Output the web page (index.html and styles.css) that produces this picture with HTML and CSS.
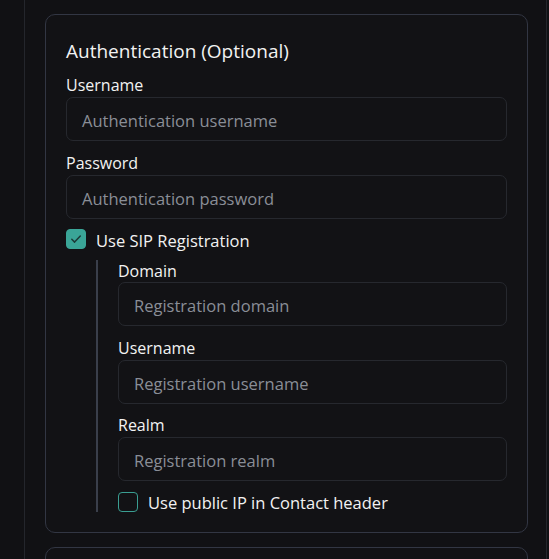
FILE: index.html
```
<!DOCTYPE html>
<html>
<head>
<meta charset="utf-8">
<link rel="stylesheet" href="styles.css">
</head>
<body>
<div class="page">
  <div class="column">
    <section class="card">
      <h2 class="card-title">Authentication (Optional)</h2>
      <div class="field">
        <label class="label">Username</label>
        <div class="input">Authentication username</div>
      </div>
      <div class="field">
        <label class="label">Password</label>
        <div class="input">Authentication password</div>
      </div>
      <div class="check-row">
        <span class="box checked">
          <svg viewBox="0 0 20 20" width="20" height="20"><path d="M5.8 10.3l2.8 2.8L14.3 7" fill="none" stroke="#1c3a37" stroke-width="1.5" stroke-linecap="round" stroke-linejoin="round"/></svg>
        </span>
        <span class="check-text">Use SIP Registration</span>
      </div>
      <div class="nested">
        <div class="field first">
          <label class="label">Domain</label>
          <div class="input">Registration domain</div>
        </div>
        <div class="field mid">
          <label class="label">Username</label>
          <div class="input">Registration username</div>
        </div>
        <div class="field last">
          <label class="label">Realm</label>
          <div class="input">Registration realm</div>
        </div>
        <div class="check-row inner">
          <span class="box"></span>
          <span class="check-text">Use public IP in Contact header</span>
        </div>
      </div>
    </section>
    <section class="card next"></section>
  </div>
</div>
</body>
</html>
```

FILE: styles.css
```
html, body {
  margin: 0;
  padding: 0;
  background: #111114;
  height: 100%;
  overflow: hidden;
}
body {
  font-family: "Open Sans", "Noto Sans", sans-serif;
  color: #f2f2f2;
}
.page {
  padding-left: 24px;
  height: 100%;
}
.column {
  border-left: 1px solid #24262c;
  border-right: 1px solid #24262c;
  width: 523px;
  height: 100%;
  padding: 14px 0 0 20px;
  box-sizing: border-box;
}
.card {
  width: 483px;
  box-sizing: border-box;
  border: 1px solid #323643;
  border-radius: 10px;
  background: #121215;
  padding: 22px 20px 20px 20px;
}
.card.next {
  margin-top: 14px;
  height: 60px;
}
.card-title {
  margin: 0 0 8px 0;
  font-size: 19px;
  font-weight: 400;
  line-height: 29px;
  height: 28px;
}
.field {
  margin-bottom: 10px;
}
.label {
  display: block;
  font-size: 16px;
  line-height: 24px;
}
.input {
  height: 44px;
  box-sizing: border-box;
  border: 1px solid #26282e;
  border-radius: 7px;
  padding: 2px 15px 0 15px;
  display: flex;
  align-items: center;
  font-size: 16.5px;
  color: #8a8e97;
}
.check-row {
  display: flex;
  align-items: center;
  gap: 10px;
  margin-top: 1px;
  height: 20px;
}
.check-text {
  font-size: 16.5px;
  line-height: 24px;
  padding-top: 3px;
}
.box {
  width: 20px;
  height: 20px;
  box-sizing: border-box;
  border: 1.5px solid #3a9e92;
  border-radius: 4px;
  display: flex;
  flex: none;
}
.box.checked {
  background: #3aa597;
  border-color: #3aa597;
}
.box svg {
  margin: -1.5px;
}
.nested {
  margin: 11px 0 0 30px;
  border-left: 2px solid #3a3f4b;
  padding-left: 20px;
}
.nested .field.first .label {
  line-height: 22px;
}
.nested .field.mid {
  margin-bottom: 9px;
}
.nested .field.last {
  margin-bottom: 11px;
}
.check-row.inner {
  margin-top: 0;
}
.check-row.inner .check-text {
  padding-top: 1px;
}
```
